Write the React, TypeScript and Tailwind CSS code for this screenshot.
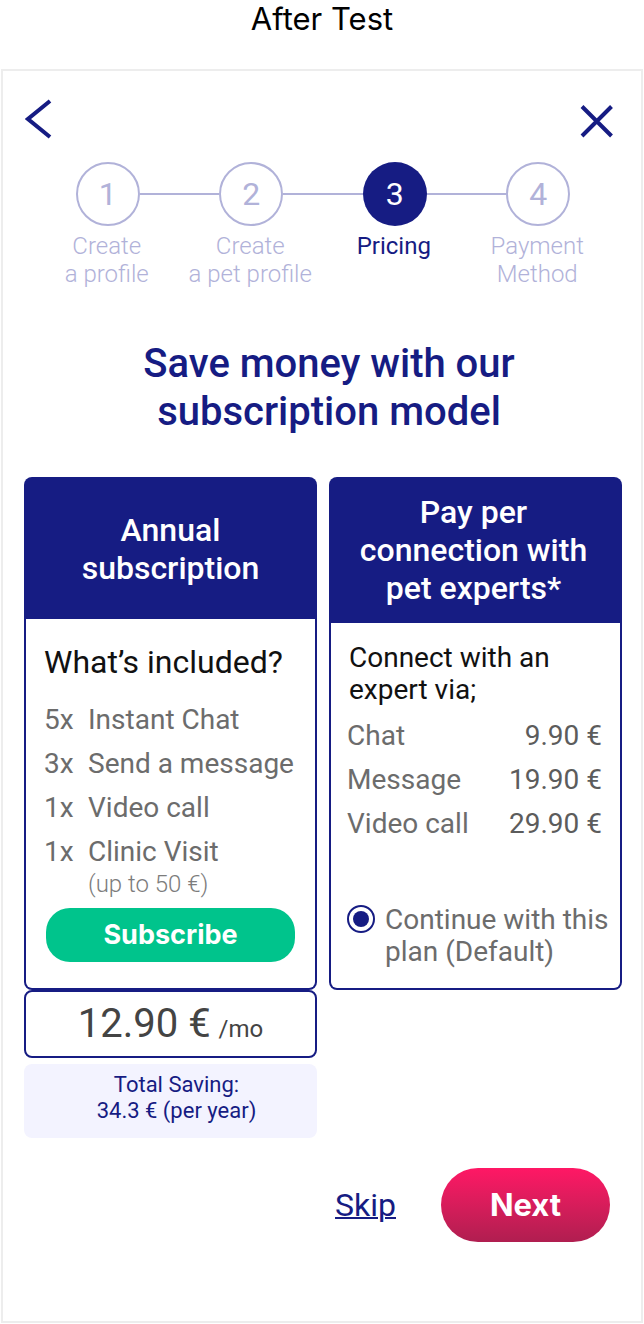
import React, { useState } from "react";

const steps = [
  { label: ["Create", "a profile"] },
  { label: ["Create", "a pet profile"] },
  { label: ["Pricing"] },
  { label: ["Payment", "Method"] },
];

const included = [
  { count: "5x", name: "Instant Chat" },
  { count: "3x", name: "Send a message" },
  { count: "1x", name: "Video call" },
  { count: "1x", name: "Clinic Visit", note: "(up to 50 €)" },
];

const prices = [
  { name: "Chat", price: "9.90 €" },
  { name: "Message", price: "19.90 €" },
  { name: "Video call", price: "29.90 €" },
];

function Stepper({ current }: { current: number }) {
  return (
    <ol className="mt-[23px] grid grid-cols-4 pr-[31px] pl-[33px]">
      {steps.map((step, i) => {
        const active = i === current;
        return (
          <li
            key={i}
            aria-current={active ? "step" : undefined}
            className="flex flex-col"
          >
            <div className="flex items-center">
              <span className={i === 0 ? "h-0.5 flex-1" : "h-0.5 flex-1 bg-[#b1b2d9]"} />
              <span
                className={
                  active
                    ? "flex size-16 items-center justify-center rounded-full bg-[#161c83] text-[32px] leading-10 text-white"
                    : "flex size-16 items-center justify-center rounded-full border-2 border-[#b1b2d9] text-[32px] leading-10 text-[#b1b2d9]"
                }
              >
                {i + 1}
              </span>
              <span
                className={i === steps.length - 1 ? "h-0.5 flex-1" : "h-0.5 flex-1 bg-[#b1b2d9]"}
              />
            </div>
            <span
              className={
                active
                  ? "mt-1.5 pr-0.5 text-center text-2xl leading-7 text-[#161c83]"
                  : "mt-1.5 pr-0.5 text-center text-2xl leading-7 font-light text-[#b1b2d9]"
              }
            >
              {step.label.map((line) => (
                <span key={line} className="block whitespace-nowrap">
                  {line}
                </span>
              ))}
            </span>
          </li>
        );
      })}
    </ol>
  );
}

function AnnualPlan() {
  return (
    <div>
      <section className="rounded-lg bg-[#161c83] p-0.5">
        <h2 className="flex h-[140px] items-center justify-center px-8 text-center text-[32px] leading-[38px] font-medium text-white">
          Annual subscription
        </h2>
        <div className="rounded-b-md bg-white px-[18px] pt-6 pb-[26px]">
          <h3 className="text-[32px] leading-[38px] whitespace-nowrap text-[#111]">
            What’s included?
          </h3>
          <ul className="mt-[17px] text-[28px] leading-[44px] text-[#6c6c6c]">
            {included.map((item) => (
              <li key={item.name} className="grid grid-cols-[44px_1fr]">
                <span>{item.count}</span>
                <span className="whitespace-nowrap">{item.name}</span>
                {item.note && (
                  <span className="col-start-2 text-2xl leading-5 font-light text-[#7c7c7c]">
                    {item.note}
                  </span>
                )}
              </li>
            ))}
          </ul>
          <div className="mt-3.5 px-0.5">
            <button
              type="button"
              className="h-[54px] w-full rounded-3xl bg-[#00c48c] font-['Inter',sans-serif] text-[27px] leading-8 font-bold text-white"
            >
              Subscribe
            </button>
          </div>
        </div>
      </section>
      <p className="flex h-[68px] items-baseline justify-center gap-2 rounded-lg border-2 border-[#161c83] pt-2 text-[#444]">
        <span className="text-[40px] leading-[48px]">12.90 €</span>
        <span className="text-2xl">/mo</span>
      </p>
      <p className="mt-1.5 rounded-lg bg-[#f3f3ff] pt-2 pb-3.5 pl-3 text-center text-[22px] leading-[26px] text-[#161c83]">
        Total Saving:
        <br />
        34.3 € (per year)
      </p>
    </div>
  );
}

function PerConnectionPlan() {
  const [chosen, setChosen] = useState(true);
  return (
    <section className="rounded-lg bg-[#161c83] p-0.5">
      <h2 className="flex h-36 items-center justify-center pr-7 pb-0.5 pl-6 text-center text-[32px] leading-[38px] font-medium text-white">
        Pay per connection with pet experts*
      </h2>
      <div className="rounded-b-md bg-white pt-[19px] pb-5 pl-4">
        <table className="w-full text-[28px] text-[#6c6c6c]">
          <caption className="pb-2 pl-0.5 text-left leading-8 text-[#111]">
            Connect with an
            <br />
            expert via;
          </caption>
          <tbody>
            {prices.map((row) => (
              <tr key={row.name} className="leading-[44px]">
                <th scope="row" className="p-0 text-left font-normal">
                  {row.name}
                </th>
                <td className="p-0 pr-[18px] text-right text-[#5c5c5c]">{row.price}</td>
              </tr>
            ))}
          </tbody>
        </table>
        <div className="mt-[58px] flex items-start gap-2.5">
          <input
            id="default-plan"
            type="radio"
            name="plan"
            checked={chosen}
            onChange={() => setChosen(true)}
            className="mt-px size-7 shrink-0 appearance-none rounded-full border-2 border-[#161c83] bg-white bg-clip-content p-1 checked:bg-[#161c83]"
          />
          <label
            htmlFor="default-plan"
            className="text-[28px] leading-8 whitespace-nowrap text-[#6c6c6c]"
          >
            Continue with this
            <br />
            plan (Default)
          </label>
        </div>
      </div>
    </section>
  );
}

export default function App() {
  return (
    <div className="bg-white px-px pb-px font-['Roboto',sans-serif]">
      <p className="text-center font-['Inter',sans-serif] text-[31px] leading-[38px] text-black">
        After Test
      </p>
      <main className="mt-[31px] border-2 border-[#ededed] pb-[79px]">
        <header className="flex items-center justify-between pt-7 pr-7 pl-[22px]">
          <button type="button" aria-label="Back">
            <svg width="28" height="40" viewBox="0 0 28 40" fill="none" stroke="#161c83" strokeWidth="4">
              <path d="M25 2 L3 20 L25 38" />
            </svg>
          </button>
          <button type="button" aria-label="Close">
            <svg width="33" height="40" viewBox="0 0 33 40" fill="none" stroke="#161c83" strokeWidth="4">
              <path d="M2 7.500 L31.500 37 M31.500 7.500 L2 37" />
            </svg>
          </button>
        </header>
        <Stepper current={2} />
        <h1 className="mt-[52px] pl-3.5 text-center text-[40px] leading-[48px] font-medium text-[#161c83]">
          Save money with our
          <br />
          subscription model
        </h1>
        <div className="mt-[41px] grid grid-cols-2 items-start gap-3 pr-[19px] pl-[21px]">
          <AnnualPlan />
          <PerConnectionPlan />
        </div>
        <footer className="mt-[30px] flex items-center justify-end gap-[45px] pr-[31px]">
          <a
            href="#skip"
            className="text-[32px] leading-10 text-[#161c83] underline decoration-2"
          >
            Skip
          </a>
          <button
            type="button"
            className="h-[74px] w-[169px] rounded-full bg-linear-to-b from-[#ff1765] to-[#b01e50] font-['Inter',sans-serif] text-[31px] leading-10 font-bold text-white"
          >
            Next
          </button>
        </footer>
      </main>
    </div>
  );
}
